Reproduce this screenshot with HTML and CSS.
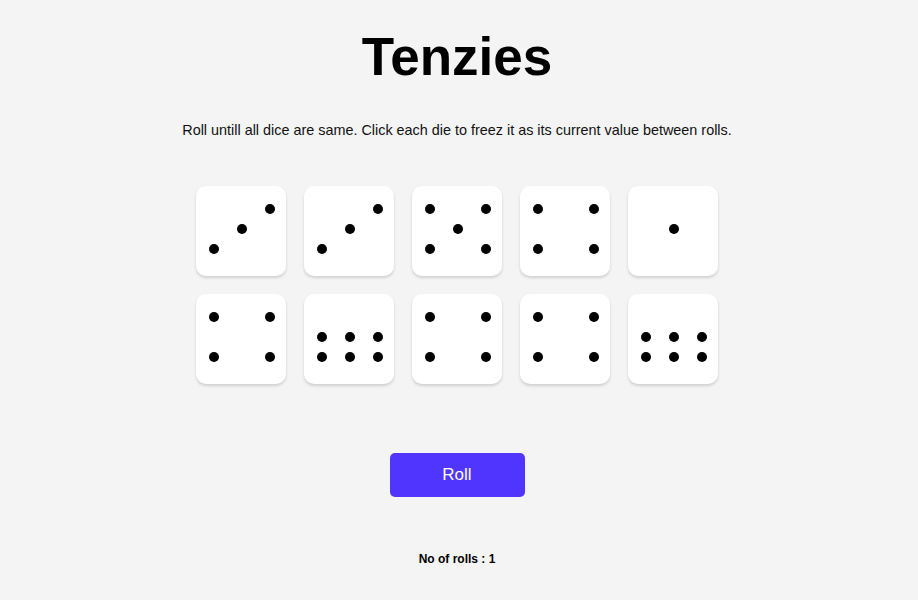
FILE: index.html
```html
<!DOCTYPE html>
<html lang="en">
<head>
<meta charset="utf-8">
<title>Tenzies</title>
<link rel="stylesheet" href="styles.css">
</head>
<body>
<main class="app">
  <h1 class="title">Tenzies</h1>
  <p class="instructions">Roll untill all dice are same. Click each die to freez it as its current value between rolls.</p>
  <div class="dice">
    <div class="die"><span class="dot c1 r3"></span><span class="dot c2 r2"></span><span class="dot c3 r1"></span></div>
    <div class="die"><span class="dot c1 r3"></span><span class="dot c2 r2"></span><span class="dot c3 r1"></span></div>
    <div class="die"><span class="dot c1 r1"></span><span class="dot c3 r1"></span><span class="dot c2 r2"></span><span class="dot c1 r3"></span><span class="dot c3 r3"></span></div>
    <div class="die"><span class="dot c1 r1"></span><span class="dot c3 r1"></span><span class="dot c1 r3"></span><span class="dot c3 r3"></span></div>
    <div class="die"><span class="dot c2 r2"></span></div>
    <div class="die"><span class="dot c1 r1"></span><span class="dot c3 r1"></span><span class="dot c1 r3"></span><span class="dot c3 r3"></span></div>
    <div class="die"><span class="dot c1 r2"></span><span class="dot c2 r2"></span><span class="dot c3 r2"></span><span class="dot c1 r3"></span><span class="dot c2 r3"></span><span class="dot c3 r3"></span></div>
    <div class="die"><span class="dot c1 r1"></span><span class="dot c3 r1"></span><span class="dot c1 r3"></span><span class="dot c3 r3"></span></div>
    <div class="die"><span class="dot c1 r1"></span><span class="dot c3 r1"></span><span class="dot c1 r3"></span><span class="dot c3 r3"></span></div>
    <div class="die"><span class="dot c1 r2"></span><span class="dot c2 r2"></span><span class="dot c3 r2"></span><span class="dot c1 r3"></span><span class="dot c2 r3"></span><span class="dot c3 r3"></span></div>
  </div>
  <button class="roll-btn" type="button">Roll</button>
  <p class="roll-count">No of rolls : 1</p>
</main>
</body>
</html>
```

FILE: styles.css
```css
* { box-sizing: border-box; }

html, body {
  margin: 0;
  padding: 0;
  background: #f4f4f4;
  font-family: "Liberation Sans", Arial, sans-serif;
  color: #000;
}

.app {
  display: flex;
  flex-direction: column;
  align-items: center;
  padding-right: 4px;
  height: 600px;
}

.title {
  margin: 27px 0 0;
  font-size: 53px;
  line-height: 60px;
  font-weight: 700;
}

.instructions {
  margin: 35px 0 0;
  font-size: 14.4px;
  line-height: 16px;
  color: #111;
}

.dice {
  margin-top: 48px;
  display: grid;
  grid-template-columns: repeat(5, 90px);
  grid-auto-rows: 90px;
  gap: 18px;
}

.die {
  background: #fff;
  border-radius: 10px;
  box-shadow: 0 2px 3px rgba(0, 0, 0, 0.15);
  display: grid;
  grid-template-columns: repeat(3, 28px);
  grid-template-rows: repeat(3, 20px);
  justify-content: center;
  align-content: start;
  padding-top: 13px;
  padding-left: 2px;
}

.dot {
  width: 10px;
  height: 10px;
  border-radius: 50%;
  background: #000;
  justify-self: center;
  align-self: center;
}

.c1 { grid-column: 1; }
.c2 { grid-column: 2; }
.c3 { grid-column: 3; }
.r1 { grid-row: 1; }
.r2 { grid-row: 2; }
.r3 { grid-row: 3; }

.roll-btn {
  margin-top: 69px;
  width: 135px;
  height: 44px;
  border: none;
  border-radius: 5px;
  background: #5035ff;
  color: #fff;
  font-family: "Liberation Sans", Arial, sans-serif;
  font-size: 17px;
  cursor: pointer;
}

.roll-count {
  margin: 55px 0 0;
  font-size: 12px;
  line-height: 14px;
  font-weight: 700;
}
```
